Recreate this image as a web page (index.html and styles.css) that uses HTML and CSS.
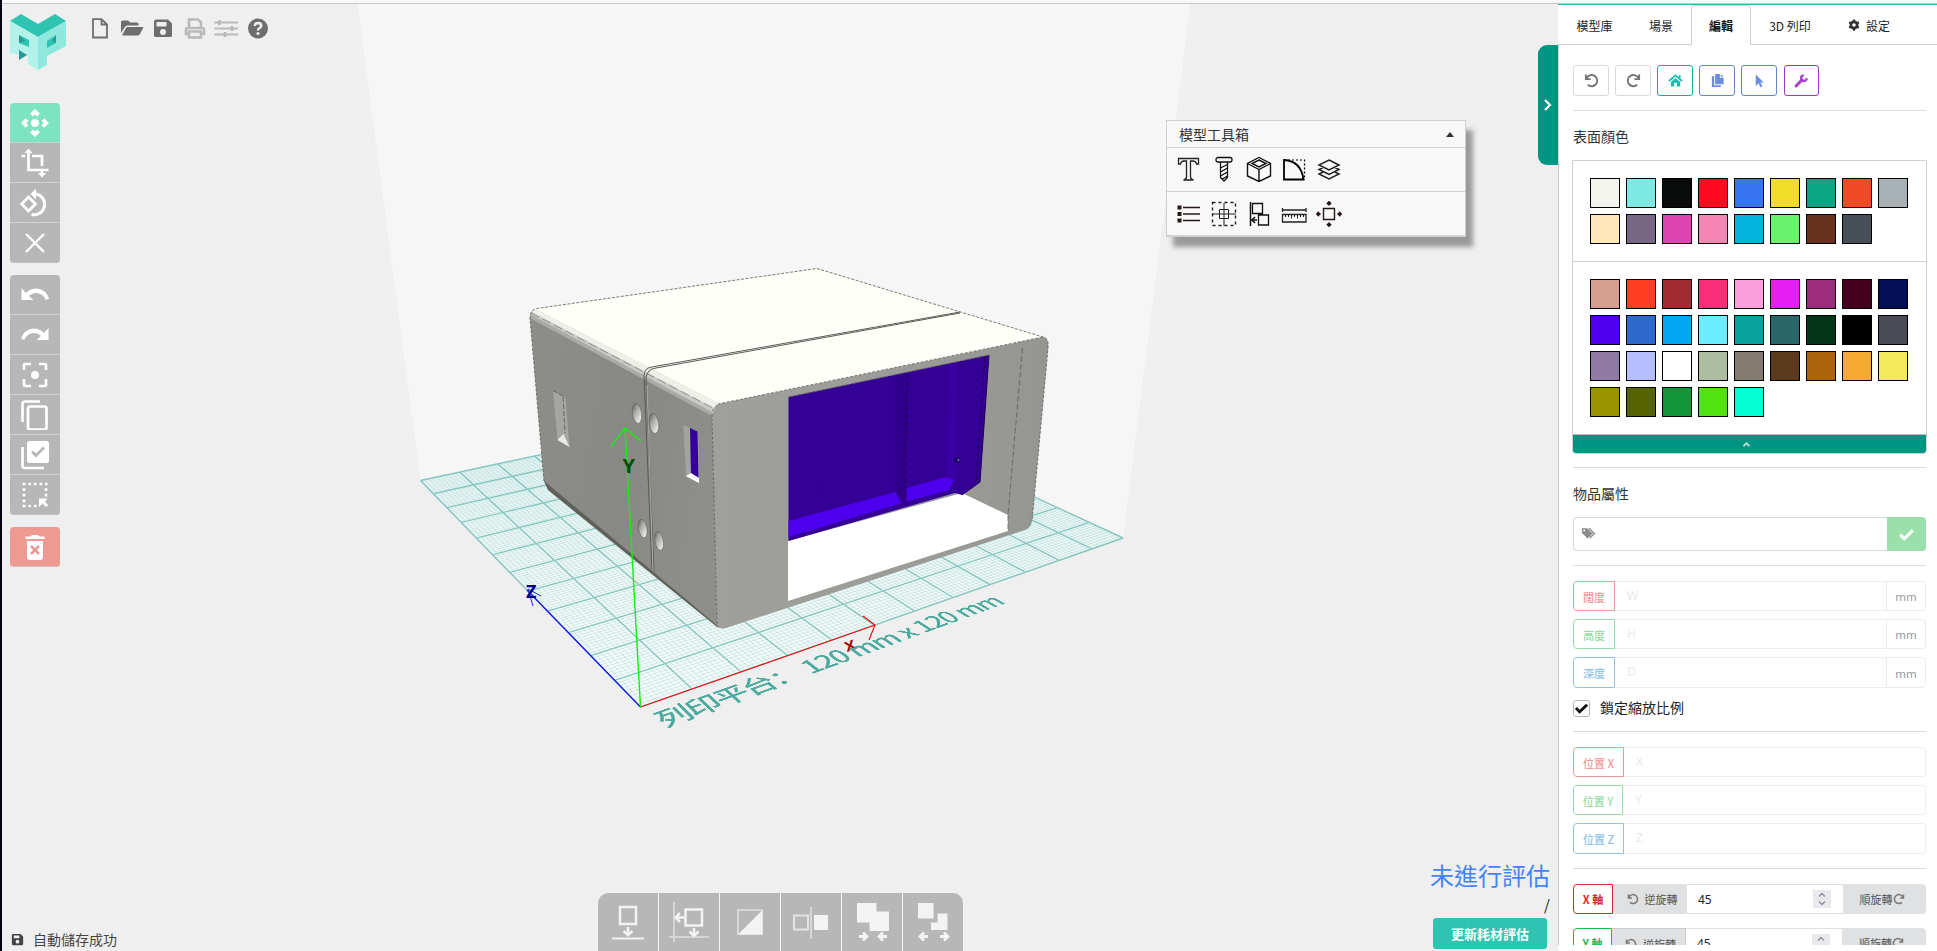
FILE: index.html
```html
<!DOCTYPE html>
<html lang="zh-Hant">
<head>
<meta charset="utf-8">
<title>3D 模型編輯</title>
<link rel="stylesheet" href="styles.css">
</head>
<body>
<div class="app">
<main class="viewport">
  <svg class="scene" width="1558" height="951" viewBox="0 0 1558 951">
    <defs>
      <linearGradient id="side" x1="0" y1="0" x2="1" y2="0.3"><stop offset="0" stop-color="#8d8e89"/><stop offset=".6" stop-color="#888984"/><stop offset="1" stop-color="#8e8f8a"/></linearGradient>
      <linearGradient id="front" x1="0" y1="0" x2="1" y2="0"><stop offset="0" stop-color="#9fa09b"/><stop offset=".6" stop-color="#9b9c97"/><stop offset="1" stop-color="#959691"/></linearGradient>
      <linearGradient id="hole" x1="0" y1="0" x2=".6" y2="1"><stop offset="0" stop-color="#50504c"/><stop offset=".45" stop-color="#a8a8a4"/><stop offset="1" stop-color="#f0f0ea"/></linearGradient>
    </defs>
    <path d="M357 0L420.5 480.5L815.5 395.8L1123 538L1191 0Z" fill="#f6f6f6"/>
    <path id="plate" fill="#f5fbfa"/>
    <path id="fine" fill="none" stroke="#8fccc5" stroke-opacity=".42" stroke-width=".8"/>
    <path id="coarse" fill="none" stroke="#62b5ab" stroke-opacity=".75" stroke-width="1.4"/>
    <g>
      <path d="M530 318L534 310L712 410L717 626L721 628L548 489L544 481Z" fill="url(#side)"/>
      <path d="M544 481L717 625L721 628L717 627L548 490Z" fill="#5f605b"/>
      <path d="M712 411L718 404L1043 337Q1049 338 1048 348L1032 521Q1031 528 1025 530L726 628Q720 630 717 625Z" fill="url(#front)"/>
      <path d="M535 309L817 268.500L1043 337L718 404L712 407Z" fill="#fefff9"/>
      <path d="M530 318Q530 311 535 309L718 403L712 414Z" fill="#c9cac5"/>
      <path d="M532 312L535 309L718 403L714 408Z" fill="#efefe9"/>
      <path d="M530 314L712 412L712 416L530 318Z" fill="#aaaba6"/>
      <path d="M531 313L713 408" stroke="#81817d" stroke-width=".8" stroke-dasharray="9 4" fill="none"/>
      <path d="M544 481L530 318Q530 310 537 308.500L817 268.500L1043 337Q1049 338 1048 348L1032 521M712 414L717 625M712 411L718 404L1043 337" fill="none" stroke="#5b5b57" stroke-width=".8" stroke-dasharray="3 1.500"/>
      <path d="M960 312L652 367Q644 368 644 376L652 571M960 313L656 368Q647 369 646 378L654 572" fill="none" stroke="#595a55" stroke-width="1"/>
      <path d="M647 385L653 571" stroke="#c0c0bb" stroke-width=".7"/>
    </g>
    <g>
      <path d="M553 390.500L565.500 397.500L569.500 447L557.500 440Z" fill="#a5a6a1"/>
      <path d="M563.500 434L569.500 447L557.500 440Z" fill="#eaeae4"/>
      <path d="M553 390.500L565.500 397.500M563 397L565 433" stroke="#555" stroke-width=".8" stroke-dasharray="5 2" fill="none"/>
      <path d="M683.500 425L698 431.500L699 483L686 477Z" fill="#a3a49f"/>
      <path d="M690 428L697.500 431.500L698.500 478L691 474Z" fill="#35009b"/>
      <path d="M686 476L691 473L699 478V483Z" fill="#fff"/>
      <g fill="url(#hole)" stroke="#555" stroke-width=".5">
        <ellipse cx="637" cy="413.500" rx="4.600" ry="10" transform="rotate(-8 637 413.500)"/>
        <ellipse cx="654" cy="423.500" rx="4.600" ry="10" transform="rotate(-8 654 423.500)"/>
        <ellipse cx="642.700" cy="528.500" rx="4.200" ry="9.300" transform="rotate(-10 642.700 528.500)"/>
        <ellipse cx="659" cy="541" rx="4.200" ry="9.500" transform="rotate(-12 659 541)"/>
      </g>
    </g>
    <g>
      <path d="M788 541L962 493L1008 515V531L788 601Z" fill="#fff"/>
      <path d="M788.500 397L989 355L980 482.500L962 495L955 493L788.500 541Z" fill="#350096"/>
      <path d="M788.500 521L895 492L902 503L788.500 537Z" fill="#4e00ee"/>
      <path d="M907 488L942 478Q949 476 954 480L949 490L907 501.500Z" fill="#4e00ee"/>
      <path d="M895 377L907 374L905 503L902 503L895 490Z" fill="#30008a"/>
      <path d="M950 364L958 362L956 480L946 477Z" fill="#3a00a2"/>
      <path d="M907.500 374L905 488M985 357L976 483" stroke="#1c0052" stroke-width="1" stroke-dasharray="5 3" fill="none"/>
      <path d="M989 355L980 482L962 495" fill="none" stroke="#22005c"/>
      <path d="M823 480L818 491" stroke="#250080"/>
      <circle cx="957" cy="460" r="3" fill="#22006a"/><circle cx="958.500" cy="460" r="1" fill="#8a80a8"/>
      <path d="M1022.500 348L1008 515V531M788.500 397L989 355" fill="none" stroke="#666762" stroke-width=".9" stroke-dasharray="6 2"/>
    </g>
    <path d="M640.500 707L527 590" stroke="#1717ee" stroke-width="1.300"/>
    <path d="M528 589L533 606M528 589L541 596" stroke="#2020ff" stroke-width="1" fill="none"/>
    <path d="M640.500 707L875 625M863 616L875 625L869 640" stroke="#e11" stroke-width="1.200" fill="none"/>
    <path d="M640.500 707L625 428M611 446.500L625 428L641 441" stroke="#12f012" stroke-width="1.400" fill="none"/>
    <text class="axis" x="622.500" y="472.500" font-size="20" fill="#004f00">Y</text>
    <text class="axis" x="526" y="598" font-size="18" fill="#00008b">Z</text>
    <text class="axis" transform="matrix(1 -.35 .35 .85 847 652)" font-size="15" fill="#a00">X</text>
  </svg>
  <div class="plane" id="plane"><span lang="zh-Hans">列印平台： 120 mm x 120 mm</span></div>

  <svg class="logo" viewBox="0 0 56 58">
    <path d="M0 8L11 1L28 11L45 1L56 8L28 24Z" fill="#2fc4b2"/>
    <path d="M0 8L28 24V57L18 51V43L0 40Z" fill="#b3f2e9"/>
    <path d="M56 8L28 24V57L37 52V43L56 33Z" fill="#8ee8dd"/>
    <path d="M9 22L19 27V34L9 30Z" fill="#2fc4b2"/><path d="M9 22L15 28L9 30Z" fill="#249a90"/>
    <path d="M9 37L17 42L9 47Z" fill="#249a90"/>
    <path d="M37 28L46 22V30L37 35Z" fill="#2fc4b2"/><path d="M46 22V30L42 28Z" fill="#249a90"/>
  </svg>
  <nav class="filebar">
    <svg viewBox="0 0 24 24"><path d="M5 3.200H13.500L19 8.500V21.500H5ZM13.500 3.200V8.500H19" fill="none" stroke="#6e6e6e" stroke-width="1.800"/></svg>
    <svg viewBox="0 0 24 24"><path d="M1 17V6Q1 4.500 2.500 4.500H8L10.500 6.500H17Q18.500 6.500 18.500 8V9.500H7.500Q5.500 9.500 4.500 11.500Z" fill="#6e6e6e"/><path d="M2 19.500L6 12Q6.600 11 8 11H23.500L20 18Q19 19.500 17.500 19.500Z" fill="#6e6e6e"/></svg>
    <svg viewBox="0 0 24 24"><path d="M5 3.500H17L21 7.500V19.500Q21 21 19 21H5Q3 21 3 19.500V5.500Q3 3.500 5 3.500ZM5.500 6V10.500H15.500V6ZM12 13A3 3 0 1 0 12 19A3 3 0 1 0 12 13Z" fill="#6e6e6e" fill-rule="evenodd"/></svg>
    <svg viewBox="0 0 24 24"><path d="M6 11.500V3.500H15L18 6.500V11.500M6 18H3V13.500Q3 12 5 12H19Q21 12 21 13.500V18H18M6 15.500H18V21.500H6Z" fill="none" stroke="#b9b9b9" stroke-width="2.500"/></svg>
    <svg viewBox="0 0 24 24"><path d="M.5 6.500H24M.5 12.500H24M.5 18.500H24" stroke="#b9b9b9" stroke-width="2.100"/><path d="M5.500 4V9M18 10V15M11 16V21" stroke="#b9b9b9" stroke-width="2.600"/></svg>
    <svg viewBox="0 0 24 24"><circle cx="12" cy="12.500" r="10" fill="#6e6e6e"/><path d="M8.700 10Q9 7 12.200 7Q15.300 7.200 15.200 9.800Q15 11.500 13 12.500Q12 13.200 12 14.500" fill="none" stroke="#efefef" stroke-width="2.500"/><circle cx="12" cy="17.500" r="1.600" fill="#efefef"/></svg>
  </nav>

  <div class="tools">
    <div class="group">
      <button class="on"><svg viewBox="0 0 30 30" fill="none" stroke="#fff" stroke-width="4"><circle cx="15" cy="15" r="4" fill="#fff" stroke="none"/><path d="M11.500 7L15 3.800L18.500 7M11.500 23L15 26.200L18.500 23M7 11.500L3.800 15L7 18.500M23 11.500L26.200 15L23 18.500"/></svg></button>
      <button><svg viewBox="0 0 30 30" fill="none" stroke="#fff" stroke-width="2.700"><path d="M1.500 8H5M8.500 4V22H28.500M12 8H22V18M22 22V26"/><path d="M4.500 5L8.500 .500L12.500 5ZM18 25H26L22 29.500Z" fill="#fff" stroke="none"/></svg></button>
      <button><svg viewBox="0 0 30 30" fill="none" stroke="#fff" stroke-width="2.800"><path d="M8.500 9L15.500 16L8.500 23L1.700 16Z"/><path d="M16 6A10.500 10.500 0 1 1 11.500 26.500" stroke-width="3"/><path d="M16 .5V11.500L10.500 6Z" fill="#fff" stroke="none"/></svg></button>
      <button><svg viewBox="0 0 30 30" fill="none" stroke="#fff" stroke-width="2.400"><path d="M6 6L24 24M24 6L6 24"/></svg></button>
    </div>
    <div class="group">
      <button><svg viewBox="0 0 30 30"><path d="M1.500 8V20H13.500L9 16Q12 13 16.500 13Q23 13.500 26 20L29 18.500Q26 9.500 16.500 8.500Q10 8.500 6 13Z" fill="#fff"/></svg></button>
      <button><svg viewBox="0 0 30 30"><path d="M28.500 8V20H16.500L21 16Q18 13 13.500 13Q7 13.500 4 20L1 18.500Q4 9.500 13.500 8.500Q20 8.500 24 13Z" fill="#fff"/></svg></button>
      <button><svg viewBox="0 0 30 30" fill="none" stroke="#fff" stroke-width="2.700"><path d="M4 10V5Q4 4 5 4H11M19 4H25Q26 4 26 5V10M26 19V25Q26 26 25 26H19M11 26H5Q4 26 4 25V19"/><circle cx="15" cy="15" r="4" fill="#fff" stroke="none"/></svg></button>
      <button><svg viewBox="0 0 30 30" fill="none" stroke="#fff" stroke-width="2.700"><path d="M20 1.500H5Q2.500 1.500 2.500 4V22"/><rect x="8" y="6.500" width="18.500" height="23" rx="2"/></svg></button>
      <button><svg viewBox="0 0 30 30" fill="none"><path d="M2.500 7V25.500Q2.500 28 5 28H24" stroke="#fff" stroke-width="2.700"/><rect x="7" y="1" width="22" height="22" rx="2.500" fill="#fff"/><path d="M12 11.500L16 15.500L24 7.500" stroke="#b7b7b7" stroke-width="2.800"/></svg></button>
      <button><svg viewBox="0 0 30 30" fill="none"><path d="M2.700 4H27.500M2.700 26H17" stroke="#fff" stroke-width="2.600" stroke-dasharray="2.800 2.800"/><path d="M4 8.200V26M26 8.200V19" stroke="#fff" stroke-width="2.600" stroke-dasharray="2.800 2.800"/><path d="M19 18.500H27.500L25 21.500L28 25L26 27L22.500 23.500L19 27Z" fill="#fff"/></svg></button>
    </div>
    <div class="group">
      <button class="del"><svg viewBox="0 0 30 30"><path d="M5.500 4.500H10.500L12 3H18L19.500 4.500H24.500V7H5.500ZM7 9H23V25Q23 28 20 28H10Q7 28 7 25Z" fill="#fff"/><path d="M11 14L19 22M19 14L11 22" stroke="#ee9a93" stroke-width="2.500"/></svg></button>
    </div>
  </div>

  <section class="toolbox">
    <header><span>模型工具箱</span><i class="tri"></i></header>
    <div class="row">
      <svg viewBox="0 0 26 26" fill="none" stroke="#222"><path d="M2.500 2.500H22.500V8H20.500Q20 5 17 5H14.500V21Q14.500 23 17.500 24H7.500Q10.500 23 10.500 21V5H8Q5 5 4.500 8H2.500Z" stroke-width="1.300"/></svg>
      <svg viewBox="0 0 26 26" fill="none" stroke="#111" stroke-width="1.300"><rect x="5" y="1.500" width="16" height="4.500" rx="2"/><path d="M9.500 6V21.500L13 25L16.500 21.500V6M9.500 12L16.500 8.500M9.500 16L16.500 12M9.500 20L16.500 16M11.500 23L16.500 20"/></svg>
      <svg viewBox="0 0 26 26" fill="none" stroke="#111" stroke-width="1.400"><path d="M13 1.500L24.500 7.500V20L13 25.500L1.500 20V7.500ZM1.500 7.500L13 13.500L24.500 7.500M13 13.500V25.500"/><path d="M13 4L20 7.500L13 11L6 7.500Z"/></svg>
      <svg viewBox="0 0 26 26" fill="none" stroke="#000"><path d="M3 23.500V4Q20 5 22.500 23.500Z" stroke-width="1.800"/><path d="M3 4H23.500V24" stroke-width="1.200" stroke-dasharray="2 2"/></svg>
      <svg viewBox="0 0 26 26" fill="none" stroke="#222" stroke-width="1.500"><path d="M13 4L23 9L13 14L3 9ZM7 11.500L3 13.500L13 18.500L23 13.500L19 11.500M7 16L3 18L13 23L23 18L19 16"/></svg>
    </div>
    <div class="row">
      <svg viewBox="0 0 26 26"><path d="M7 6.500H24M7 13H24M7 19.500H24" stroke="#231815" stroke-width="1.600"/><path d="M1.500 4.500H5.500V8.500H1.500ZM1.500 11H5.500V15H1.500ZM1.500 17.500H5.500V21.500H1.500Z" fill="#231815"/></svg>
      <svg viewBox="0 0 26 26" fill="none" stroke="#222"><path d="M1.500 1.500H24.500V24.500H1.500Z" stroke-width="1.400" stroke-dasharray="3 3"/><path d="M13 2V25M1 13H25M8.500 8.500H17.500V17.500H8.500Z"/></svg>
      <svg viewBox="0 0 26 26" fill="none" stroke="#111" stroke-width="1.300"><path d="M4.500 1V25" stroke-width="1.500"/><path d="M6.500 2.500H16.500V12.500H6.500ZM12.500 14H22.500V24H12.500ZM5.500 19H11"/><path d="M9 16L6 19L9 22" stroke-width="1.700"/></svg>
      <svg viewBox="0 0 26 26" fill="none" stroke="#222" stroke-width="1.300"><path d="M1.500 7V11M25 7V11M1.500 9H25M1.500 13.500H25V21H1.500Z"/><path d="M4.500 14V16M7.500 14V16M10.500 14V17.500M13.500 14V16M16.500 14V17.500M19.500 14V16M22.500 14V16" stroke-width="1"/></svg>
      <svg viewBox="0 0 26 26" fill="none" stroke="#231815" stroke-width="1.800"><path d="M7.500 7.500H18.500V18.500H7.500Z" stroke-width="1.400"/><path d="M11 3L13 1L15 3M13 1V4.500M11 23L13 25L15 23M13 25V21.500M3 11L1 13L3 15M1 13H4.500M23 11L25 13L23 15M25 13H21.500"/></svg>
    </div>
  </section>

  <div class="actions">
    <button><svg viewBox="0 0 40 40" fill="none" stroke="#f3f3f3"><path d="M12 5H28V22H12Z" stroke-width="2.500"/><path d="M4 36.500H36" stroke-width="2.200"/><path d="M20 25V33M15.500 29L20 33L24.500 29" stroke-width="2.500"/></svg></button>
    <button><svg viewBox="0 0 40 40" fill="none" stroke="#f3f3f3"><path d="M5 0V40M0 35H40" stroke="#dedede" stroke-width="1.500"/><path d="M16.500 7.500H33V23.500H16.500Z" stroke-width="2.500"/><path d="M15 15.500H7M11 11L6.500 15.500L11 20M25 26V34M20.500 29.500L25 34L29.500 29.500" stroke-width="2.500"/></svg></button>
    <button><svg viewBox="0 0 40 40"><path d="M8 8H32V32H8Z" fill="none" stroke="#e0e0e0" stroke-width="1.500"/><path d="M32.500 8V32.500H8Z" fill="#f3f3f3"/></svg></button>
    <button><svg viewBox="0 0 40 40"><path d="M3 13.500H17V27.500H3Z" fill="none" stroke="#e4e4e4" stroke-width="2"/><path d="M20 5V37" stroke="#e0e0e0" stroke-width="1.600"/><path d="M23 13H37V28H23Z" fill="#f3f3f3"/></svg></button>
    <button><svg viewBox="0 0 40 40"><path d="M5 1H24.500V9.500H37V29H17.500V20.500H5Z" fill="#f3f3f3"/><path d="M7 34.500H14M11 30.500L15 34.500L11 38.500M35 34.500H28M31 30.500L27 34.500L31 38.500" fill="none" stroke="#f3f3f3" stroke-width="2.800"/></svg></button>
    <button><svg viewBox="0 0 40 40"><path d="M5 1H20.500V16.500H5ZM24.500 11.500H34.500V28H18V20.500H24.500Z" fill="#f3f3f3"/><path d="M15 34.500H8M11 30.500L7 34.500L11 38.500M27 34.500H34M31 30.500L35 34.500L31 38.500" fill="none" stroke="#f3f3f3" stroke-width="2.800"/></svg></button>
  </div>

  <div class="status"><svg viewBox="0 0 24 24"><path d="M5 3H17L21 7V19Q21 21 19 21H5Q3 21 3 19V5Q3 3 5 3ZM6 5.500V10H15V5.500ZM12 12.500A3 3 0 1 0 12 18.500A3 3 0 1 0 12 12.500Z" fill="#444" fill-rule="evenodd"/></svg>自動儲存成功</div>

  <div class="estimate">
    <div class="state">未進行評估</div>
    <div class="slash">/</div>
    <button>更新耗材評估</button>
  </div>
  <button class="handle"><svg viewBox="0 0 10 14"><path d="M2 2L7 7L2 12" fill="none" stroke="#fff" stroke-width="2.200"/></svg></button>
</main>

<aside class="side">
  <nav class="tabs">
    <a class="t1">模型庫</a><a class="t2">場景</a><a class="t3 active">編輯</a><a class="t4">3D 列印</a><a class="t5"><svg viewBox="0 0 16 16"><circle cx="8" cy="8" r="4.200" fill="none" stroke="#333" stroke-width="3.600"/><path d="M8 .500V4M8 12V15.500M1.500 4.300L4.500 6M11.500 10L14.500 11.700M1.500 11.700L4.500 10M11.500 6L14.500 4.300" stroke="#333" stroke-width="3"/></svg>設定</a>
  </nav>
  <div class="content">
    <div class="quick">
      <button><svg viewBox="0 0 16 16" fill="none" stroke="#757575" stroke-width="2"><path d="M2 1.500V6.500H7M2.500 6A6 6 0 1 1 4 12.500"/></svg></button>
      <button><svg viewBox="0 0 16 16" fill="none" stroke="#757575" stroke-width="2"><path d="M14 1.500V6.500H9M13.500 6A6 6 0 1 0 12 12.500"/></svg></button>
      <button class="teal"><svg viewBox="0 0 16 16"><path d="M1 8.500L8 2.500L15 8.500M12.500 2.500V5" fill="none" stroke="#1bbcb0" stroke-width="1.900"/><path d="M3 9.500L8 5.300L13 9.500V14.500H9.500V10.500H6.500V14.500H3Z" fill="#1bbcb0"/></svg></button>
      <button class="blue"><svg viewBox="0 0 16 16"><path d="M5.500 1H10.500V5H14.500V12H5.500ZM11.500 1L14.500 4H11.500ZM2 3.500H4.500V13H11.500V15H2Z" fill="#6b8edc"/></svg></button>
      <button class="blue"><svg viewBox="0 0 16 16"><path d="M4 1.500L12.500 10H9L11 14.300L9 15.200L7 11L4 13.800Z" fill="#6b8edc"/></svg></button>
      <button class="purple"><svg viewBox="0 0 16 16"><path d="M2.300 13.700L8.500 7.500" stroke="#a941cf" stroke-width="3.200" stroke-linecap="round"/><path d="M13.500 5.500A3 3 0 1 1 10.500 2.500" stroke="#a941cf" stroke-width="2.600" fill="none"/></svg></button>
    </div>
    <hr>
    <h2>表面顏色</h2>
    <div class="palette">
      <div class="swatches a" id="base"></div>
      <div class="swatches b" id="extra"></div>
      <div class="fold"><svg viewBox="0 0 10 8"><path d="M1.500 6L5 2.500L8.500 6" fill="none" stroke="#c6ebe5" stroke-width="2"/></svg></div>
    </div>
    <hr class="h2nd">
    <h2 class="attr">物品屬性</h2>
    <div class="name"><div class="field"><svg viewBox="0 0 18 14"><path d="M1 1H7L13 7L7.500 12.500L1 6.500Z" fill="#8b8b8b"/><path d="M9 1L15 7L10 12" fill="none" stroke="#8b8b8b" stroke-width="1.500"/><circle cx="3.600" cy="3.600" r="1.100" fill="#fff"/></svg></div><button><svg viewBox="0 0 16 14"><path d="M2 7L6 11L14 3" fill="none" stroke="#f7fcf8" stroke-width="3"/></svg></button></div>
    <hr class="h3rd">
    <div class="line red"><b>闊度</b><i>W</i><u>mm</u></div>
    <div class="line green"><b>高度</b><i>H</i><u>mm</u></div>
    <div class="line sky tall"><b>深度</b><i>D</i><u>mm</u></div>
    <label class="lock"><span><svg viewBox="0 0 16 14"><path d="M2 6.500L6 10.500L14 3" fill="none" stroke="#111" stroke-width="3.200"/></svg></span><strong>鎖定縮放比例</strong></label>
    <hr class="h4th">
    <div class="line red pos"><b>位置 X</b><i>X</i></div>
    <div class="line green pos"><b>位置 Y</b><i>Y</i></div>
    <div class="line sky pos tall"><b>位置 Z</b><i>Z</i></div>
    <hr class="h5th">
    <div class="rot rx"><b>X 軸</b><span class="ccw"><svg viewBox="0 0 16 16" fill="none" stroke="#777" stroke-width="2"><path d="M2 2V6.500H6.500M2.500 6A6 6 0 1 1 4 12.500"/></svg>逆旋轉</span><span class="num">45<em><svg viewBox="0 0 10 14"><path d="M2 4.500L5 1.500L8 4.500M2 9.500L5 12.500L8 9.500" fill="none" stroke="#8b8b96" stroke-width="1.300"/></svg></em></span><span class="cw">順旋轉<svg viewBox="0 0 16 16" fill="none" stroke="#777" stroke-width="2"><path d="M14 2V6.500H9.500M13.500 6A6 6 0 1 0 12 12.500"/></svg></span></div>
    <div class="rot ry"><b>Y 軸</b><span class="ccw"><svg viewBox="0 0 16 16" fill="none" stroke="#777" stroke-width="2"><path d="M2 2V6.500H6.500M2.500 6A6 6 0 1 1 4 12.500"/></svg>逆旋轉</span><span class="num">45<em><svg viewBox="0 0 10 14"><path d="M2 4.500L5 1.500L8 4.500M2 9.500L5 12.500L8 9.500" fill="none" stroke="#8b8b96" stroke-width="1.300"/></svg></em></span><span class="cw">順旋轉<svg viewBox="0 0 16 16" fill="none" stroke="#777" stroke-width="2"><path d="M14 2V6.500H9.500M13.500 6A6 6 0 1 0 12 12.500"/></svg></span></div>
  </div>
</aside>
</div>
<script src="app.js"></script>
</body>
</html>
```
FILE: styles.css
```css
* { box-sizing: border-box; }
body { margin: 0; background: #efefef; font-family: "Noto Sans CJK TC", sans-serif; color: #333; overflow: hidden; }
button { border: 0; padding: 0; margin: 0; background: none; font: inherit; display: flex; align-items: center; justify-content: center; }
svg { display: block; flex: none; }

.app { display: flex; width: 1937px; height: 951px; position: relative; }
.app::before { content: ""; position: absolute; left: 0; top: 0; width: 100%; height: 3px; background: #f8f8f8; border-bottom: 1px solid #c9c9c9; z-index: 5; }
.app::after { content: ""; position: absolute; left: 0; top: 0; width: 2px; height: 100%; background: #05050f; z-index: 6; }

/* 3D viewport */
.viewport { position: relative; width: 1558px; height: 951px; overflow: hidden; background: #efefef; flex: none; }
.scene { position: absolute; left: 0; top: 0; }
.axis { font-family: "Open Sans", sans-serif; font-weight: 700; }
.plane { position: absolute; left: 0; top: 0; width: 1200px; height: 1200px; transform-origin: 0 0; color: #4bab9f; }
.plane span { position: absolute; left: 5px; top: 1211px; font-family: "Noto Sans CJK SC", sans-serif; font-size: 60px; line-height: 80px; white-space: nowrap; font-weight: 500; letter-spacing: -3.6px; word-spacing: 2px; }

.logo { position: absolute; left: 10px; top: 13px; width: 56px; height: 58px; }
.filebar { position: absolute; left: 88px; top: 16px; display: flex; gap: 7.500px; }
.filebar svg { width: 24px; height: 24px; }

.tools { position: absolute; left: 10px; top: 103px; width: 50px; display: flex; flex-direction: column; gap: 12px; }
.group { border-radius: 4px; overflow: hidden; }
.group button { width: 50px; height: 40px; padding: 0 1px 0 0; background: #b7b7b7; border-bottom: 1px solid #cfcfcf; }
.group button:last-child { border-bottom-color: #c4c4c4; }
.group svg { width: 30px; height: 30px; }
.group .on { background: #7ee3c0; }
.group .del { background: #ee9a93; }

.toolbox { position: absolute; left: 1166px; top: 120px; width: 300px; height: 117px; background: #f8f8f8; border: 1px solid #d0d0d0; border-bottom-width: 2px; box-shadow: 7px 10px 5px rgba(0,0,0,.36); }
.toolbox header { height: 27px; border-bottom: 1px solid #d0d0d0; padding: 0 11px 0 12px; display: flex; align-items: center; justify-content: space-between; font-size: 14px; color: #333; }
.tri { border: 4px solid transparent; border-top: 0; border-bottom: 5px solid #333; }
.row { height: 43px; padding: 0 0 1px 9px; display: flex; gap: 9px; align-items: center; }
.row + .row { border-top: 1px solid #d0d0d0; height: 44px; padding-bottom: 0; }
.row svg { width: 26px; height: 26px; }

.actions { position: absolute; left: 598px; top: 893px; width: 365px; height: 58px; display: grid; grid-template-columns: repeat(6, 1fr); gap: 1px; background: #f5f5f5; border-radius: 10px 10px 0 0; overflow: hidden; }
.actions button { background: #b7b7b7; }
.actions svg { width: 40px; height: 40px; }

.status { position: absolute; left: 10px; top: 929px; display: flex; align-items: center; gap: 8px; font-size: 14px; line-height: 20px; color: #444; }
.status svg { width: 15px; height: 15px; }

.estimate { position: absolute; right: 8px; top: 857px; display: flex; flex-direction: column; align-items: flex-end; }
.state { font-size: 24px; line-height: 36px; color: #4285f4; font-weight: 400; }
.slash { font-size: 15px; line-height: 25px; height: 25px; color: #222; margin-top: -1px; }
.estimate button { width: 114px; height: 31px; margin: 1px 3px 0 0; padding-bottom: 1px; border-radius: 3px; background: #2fc4b2; color: #fff; font-size: 13px; font-weight: 700; }
.handle { position: absolute; left: 1538px; top: 45px; width: 20px; height: 120px; background: #009483; border-radius: 9px 0 0 9px; }
.handle svg { width: 10px; height: 14px; }

/* side panel */
.side { width: 379px; height: 951px; background: #fff; overflow: hidden; padding-top: 3px; border-bottom: 6px solid #fff; }
.tabs { height: 42px; border-top: 2px solid #2bbbad; border-bottom: 1px solid #cfcfcf; display: flex; font-size: 12px; color: #222; }
.tabs a { display: flex; align-items: center; justify-content: center; height: 40px; }
.t1 { width: 73px; } .t2 { width: 60px; } .t3 { width: 60px; } .t4 { width: 78px; } .t5 { width: 80px; gap: 6px; }
.tabs .active { border: 1px solid #cfcfcf; border-bottom: 0; border-radius: 4px 4px 0 0; background: #fff; font-weight: 700; color: #111; }
.t5 svg { width: 12px; height: 12px; }
.content { border-left: 1px solid #cfcfcf; height: 900px; padding: 20px 11px 0 14px; }
.quick { display: flex; gap: 6px; }
.quick button { width: 36px; height: 31px; border: 1px solid #d9d9d9; border-radius: 3px; }
.quick svg { width: 15px; height: 15px; }
.quick .teal { border-color: #12aea0; }
.quick .blue { border-color: #6484d2; }
.quick .purple { border-color: #a333c8; margin-left: 1px; width: 35px; }
hr { border: 0; height: 1px; background: #dcdcdc; margin: 14px 0 0; }
h2 { margin: 15px 0 13px; font-size: 14px; line-height: 21px; font-weight: 400; color: #333; }
.palette { margin: 0 -1px; height: 294px; border: 1px solid #d0d0d0; border-radius: 0 0 4px 4px; display: flex; flex-direction: column; overflow: hidden; }
.swatches { display: grid; grid-template-columns: repeat(9, 30px); gap: 6px; padding: 17px; align-content: start; }
.swatches i { width: 30px; height: 30px; border: 1px solid #000; }
.a { height: 100px; }
.b { height: 174px; border-top: 1px solid #d0d0d0; border-bottom: 1px solid #bbb; }
.fold { height: 18px; background: #009483; display: flex; align-items: center; justify-content: center; padding-right: 6px; }
.fold svg { width: 9px; height: 7px; }
.h2nd { margin-top: 13px; }
.attr { margin: 15px 0 13px; }
.name { display: flex; height: 34px; }
.field { flex: 1; border: 1px solid #d9d9d9; border-right: 0; border-radius: 4px 0 0 4px; padding: 9px 7px; }
.field svg { width: 16px; height: 13px; }
.name button { width: 39px; background: #9be0ab; border-radius: 0 4px 4px 0; }
.name button svg { width: 17px; height: 15px; }
.h3rd { margin-bottom: 15px; }
.line { display: flex; height: 30px; margin-bottom: 8px; font-size: 11px; font-weight: 400; }
.tall { height: 31px; }
.line b { width: 42px; border: 1px solid; border-radius: 4px 0 0 4px; display: flex; align-items: center; justify-content: center; font-weight: 500; padding-top: 1px; }
.line i { flex: 1; font-style: normal; border: solid #eee; border-width: 1px 0; color: #e8e8e8; padding: 6px 12px; line-height: 16px; font-size: 12px; font-family: "Noto Sans", sans-serif; }
.line u { width: 40px; border: 1px solid #ebebeb; border-radius: 0 4px 4px 0; text-decoration: none; display: flex; align-items: center; justify-content: center; color: #999; font-size: 11.5px; padding-top: 1px; font-family: "Noto Sans", sans-serif; }
.red b { color: #ee9999; } .green b { color: #95dda6; } .sky b { color: #90c2e8; }
.pos b { width: 51px; } .pos.green b { width: 50px; }
.pos i { border-right-width: 1px; border-radius: 0 4px 4px 0; }
.lock { display: flex; align-items: center; height: 17px; margin-top: 12px; gap: 10px; font-size: 14px; color: #222; }
.lock strong { font-weight: 400; line-height: 17px; padding-bottom: 2px; }
.lock span { width: 17px; height: 17px; border: 1px solid #b8b8b8; border-radius: 3px; display: flex; align-items: center; justify-content: center; }
.lock svg { width: 15px; height: 13px; }
.h4th, .h5th { margin-bottom: 15px; }
.rot { display: flex; height: 30px; margin-bottom: 14px; font-size: 11px; }
.rot b { width: 40px; border: 1px solid #db2828; color: #db2828; border-radius: 4px 0 0 4px; display: flex; align-items: center; justify-content: center; }
.ry b { border-color: #21ba45; color: #21ba45; width: 39px; }
.rot svg { width: 12px; height: 12px; }
.ccw { width: 74px; background: #e0e1e2; display: flex; align-items: center; justify-content: center; gap: 6px; padding-left: 4px; color: #555; }
.num { width: 156px; border: solid #dedede; border-width: 1px 0; display: flex; align-items: center; justify-content: space-between; padding: 0 12px 0 11px; font-size: 12px; color: #222; font-family: "Noto Sans", sans-serif; }
.ry .ccw { border: solid #cacbcd; border-width: 1px 1px 0 0; }
.num em { width: 18px; height: 18px; background: #e9e9ed; display: flex; align-items: center; justify-content: center; }
.rot em svg { width: 10px; height: 14px; }
.cw { flex: 1; background: #e0e1e2; border-radius: 0 4px 4px 0; display: flex; align-items: center; justify-content: center; padding-right: 5px; color: #555; }
```
FILE: app.js
```js
// Palette swatches
const base = ["#f3f4ee","#7ceae3","#090c0b","#ff0a20","#3676f2","#f2dc2a","#0aa585","#f14a25","#a8b2b4","#fee6b8","#776784","#db44b1","#f585b3","#04b3dd","#69f26b","#683221","#474f58"];
const extra = ["#d69f91","#ff3d22","#a22b32","#fa2d78","#fb9fdc","#e71df5","#9a2d7c","#450020","#020f55","#4e00ee","#2e69ce","#03a8f3","#6debff","#09a29c","#2b676a","#043519","#000","#4a4956","#8f7ba4","#b5bfff","#fff","#adbda0","#837b70","#5b3a1d","#ad630a","#f7aa32","#f4e95b","#9a9400","#556303","#139539","#50e211","#05ffd3"];
const fill = (id, list) => { document.getElementById(id).innerHTML = list.map(c => `<i style="background:${c}"></i>`).join(""); };
fill("base", base);
fill("extra", extra);

// Perspective mapping of a unit square onto four screen corners
function quad(p0, p1, p2, p3) {
  const sx = p0[0] - p1[0] + p2[0] - p3[0], sy = p0[1] - p1[1] + p2[1] - p3[1];
  const dx1 = p1[0] - p2[0], dx2 = p3[0] - p2[0], dy1 = p1[1] - p2[1], dy2 = p3[1] - p2[1];
  const den = dx1 * dy2 - dx2 * dy1;
  const g = (sx * dy2 - dx2 * sy) / den, h = (dx1 * sy - sx * dy1) / den;
  return { a: p1[0] - p0[0] + g * p1[0], b: p3[0] - p0[0] + h * p3[0], c: p0[0],
           d: p1[1] - p0[1] + g * p1[1], e: p3[1] - p0[1] + h * p3[1], f: p0[1], g, h };
}
const O = [640.5, 707], X = [1123, 538], B = [815.5, 395.8], Z = [420.5, 480.5];
const m = quad(O, X, B, Z);
const at = (u, v) => {
  const w = m.g * u + m.h * v + 1;
  return ((m.a * u + m.b * v + m.c) / w).toFixed(2) + " " + ((m.d * u + m.e * v + m.f) / w).toFixed(2);
};
let fine = "", coarse = "";
for (let i = 0; i <= 120; i++) {
  const t = i / 120, seg = `M${at(t, 0)}L${at(t, 1)}M${at(0, t)}L${at(1, t)}`;
  if (i % 10) fine += seg; else coarse += seg;
}
document.getElementById("plate").setAttribute("d", `M${O}L${X}L${B}L${Z}Z`);
document.getElementById("fine").setAttribute("d", fine);
document.getElementById("coarse").setAttribute("d", coarse);

const q = quad(Z, B, X, O), S = 1200;
document.getElementById("plane").style.transform =
  `matrix3d(${[q.a / S, q.d / S, 0, q.g / S, q.b / S, q.e / S, 0, q.h / S, 0, 0, 1, 0, q.c, q.f, 0, 1].join(",")})`;
```
